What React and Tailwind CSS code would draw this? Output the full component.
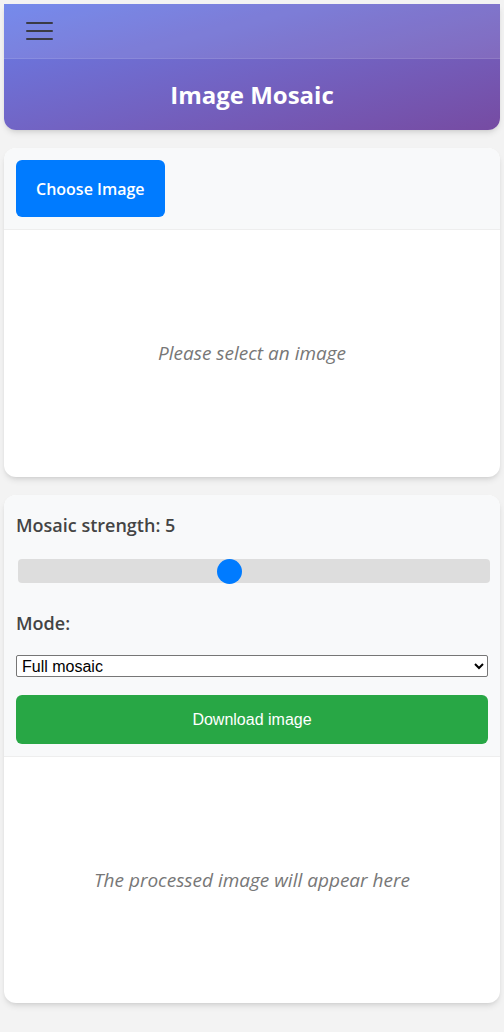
import React, { useState } from "react";

const font = "font-['Segoe_UI','Open_Sans','Noto_Sans',sans-serif]";

export default function App() {
  const [strength, setStrength] = useState(5);
  const [mode, setMode] = useState("full");

  return (
    <div className={`min-h-[1032px] bg-[#f3f3f3] px-1 pt-1 pb-6 ${font}`}>
      {/* header */}
      <header className="rounded-b-xl bg-gradient-to-br from-[#667eea] to-[#764ba2] shadow-md overflow-hidden">
        <div className="h-[55px] bg-white/10 border-b border-white/10 flex items-center px-[22px]">
          <button className="flex flex-col gap-[6px] w-[27px]">
            <span className="block h-[2px] bg-[#333]/90 rounded" />
            <span className="block h-[2px] bg-[#333]/90 rounded" />
            <span className="block h-[2px] bg-[#333]/90 rounded" />
          </button>
        </div>
        <div className="h-[71px] flex items-center justify-center">
          <h1 className="text-white text-[24px] font-bold">Image Mosaic</h1>
        </div>
      </header>

      {/* upload card */}
      <section className="mt-[18px] rounded-xl bg-white shadow-md overflow-hidden">
        <div className="bg-[#f8f9fa] border-b border-[#eee] px-3 py-3">
          <button className="h-[57px] px-5 rounded-md bg-[#007bff] text-white text-[16px] font-semibold">
            Choose Image
          </button>
        </div>
        <div className="h-[247px] flex items-center justify-center">
          <p className="italic text-[#777] text-[19px]">Please select an image</p>
        </div>
      </section>

      {/* settings card */}
      <section className="mt-[18px] rounded-xl bg-white shadow-md overflow-hidden">
        <div className="bg-[#f8f9fa] border-b border-[#eee] px-3 pt-[18px] pb-3">
          <label className="block text-[18px] font-semibold text-[#444] leading-6">
            Mosaic strength: {strength}
          </label>
          <input
            type="range"
            min="1"
            max="10"
            value={strength}
            onChange={(e) => setStrength(Number(e.target.value))}
            className="block mt-[22px] ml-[2px] w-[472px] h-6 rounded bg-[#ddd] appearance-none outline-none [&::-webkit-slider-thumb]:appearance-none [&::-webkit-slider-thumb]:w-[25px] [&::-webkit-slider-thumb]:h-[25px] [&::-webkit-slider-thumb]:rounded-full [&::-webkit-slider-thumb]:bg-[#007bff]"
          />
          <label className="block mt-[28px] text-[18px] font-semibold text-[#444] leading-6">
            Mode:
          </label>
          <select
            value={mode}
            onChange={(e) => setMode(e.target.value)}
            className="block mt-[20px] w-full h-[22px] border border-[#767676] rounded-[2px] bg-white text-[16px] text-black font-['Liberation_Sans',Arial,sans-serif] pl-[1px]"
          >
            <option value="full">Full mosaic</option>
            <option value="face">Face mosaic</option>
          </select>
          <button className="mt-[18px] w-full h-[49px] rounded-md bg-[#28a745] text-white text-[16px] font-['Liberation_Sans',Arial,sans-serif]">
            Download image
          </button>
        </div>
        <div className="h-[246px] flex items-center justify-center">
          <p className="italic text-[#777] text-[19px]">The processed image will appear here</p>
        </div>
      </section>
    </div>
  );
}
